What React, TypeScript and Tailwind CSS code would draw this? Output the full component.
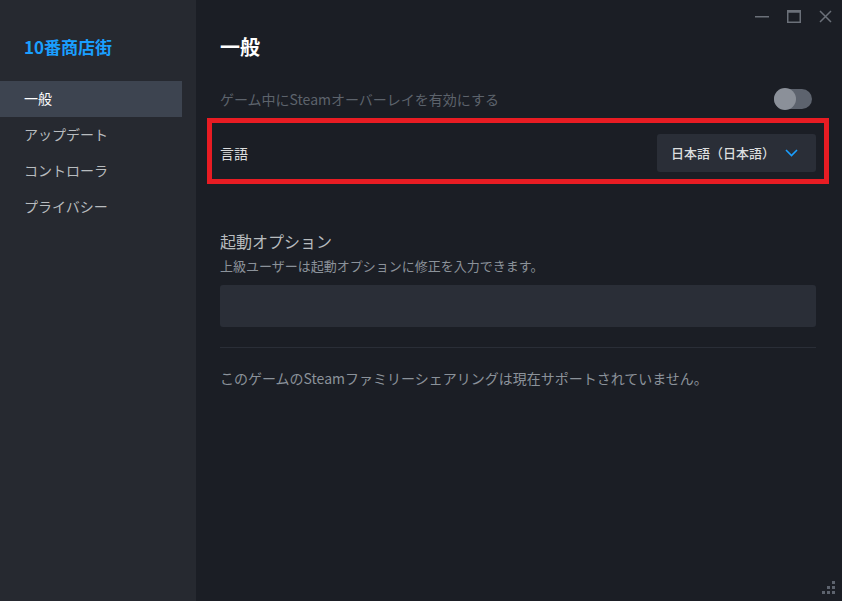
import React from "react";

const font = { fontFamily: '"Noto Sans CJK JP", "Noto Sans", sans-serif' };

export default function App() {
  const items = ["一般", "アップデート", "コントローラ", "プライバシー"];
  return (
    <div
      className="w-[842px] h-[601px] flex overflow-hidden font-['Noto_Sans_CJK_JP',sans-serif]"
      style={font}
    >
      <aside className="w-[196px] shrink-0 bg-[#262930] flex flex-col">
        <div className="pt-[36px] pl-[24px] h-[81px] text-[17px] leading-[22px] font-bold text-[#1a9fff]">
          10番商店街
        </div>
        <ul className="pr-[14px]">
          {items.map((t, i) => (
            <li
              key={t}
              className={
                i === 0
                  ? "h-[36px] flex items-center pl-[24px] pb-[2px] text-[14px] bg-[#3d4450] text-white"
                  : "h-[36px] flex items-center pl-[24px] pb-[2px] text-[14px] text-[#b8bcbf]"
              }
            >
              {t}
            </li>
          ))}
        </ul>
      </aside>
      <main className="flex-1 bg-[#1b1e25] relative flex flex-col">
        <div className="h-[32px] flex justify-end items-start">
          <div className="flex items-center pt-[9px] pr-[10px] gap-[18px]">
            <svg width="14" height="14" viewBox="0 0 14 14">
              <rect x="0" y="7" width="14" height="1.5" fill="#6b7079" />
            </svg>
            <svg width="14" height="13" viewBox="0 0 14 13">
              <rect x="0.75" y="0.75" width="12.5" height="11.5" fill="none" stroke="#6b7079" strokeWidth="1.5" />
              <rect x="0.75" y="0.75" width="12.5" height="2" fill="#6b7079" />
            </svg>
            <svg width="13" height="13" viewBox="0 0 13 13">
              <path d="M1 1 L12 12 M12 1 L1 12" stroke="#6b7079" strokeWidth="1.5" />
            </svg>
          </div>
        </div>
        <div className="pl-[24px] pr-[26px] flex flex-col">
          <h1 className="text-[20px] leading-[30px] font-bold text-white">一般</h1>
          <div className="mt-[18px] h-[38px] flex items-center justify-between">
            <span className="text-[14px] text-[#5d636c]">ゲーム中にSteamオーバーレイを有効にする</span>
            <div className="w-[38px] h-[20px] rounded-full bg-[#5d636e] relative mr-[4px]">
              <div className="absolute left-0 top-[-1px] w-[22px] h-[22px] rounded-full bg-[#8b9099]" />
            </div>
          </div>
          <div className="-mx-[13px] border-[5px] border-[#e81c23] px-[8px] pt-[11px] pb-[7px] flex items-center justify-between">
            <span className="text-[14px] text-[#dcdedf]">言語</span>
            <div className="w-[159px] h-[38px] rounded-[3px] bg-[#2a2e37] flex items-center pl-[14px] pr-[18px] justify-between">
              <span className="text-[13px] text-[#dcdedf] font-medium">日本語（日本語）</span>
              <svg width="13" height="8" viewBox="0 0 13 8">
                <path d="M1 1 L6.5 6.5 L12 1" fill="none" stroke="#1a9fff" strokeWidth="1.6" />
              </svg>
            </div>
          </div>
          <div className="mt-[46px] text-[16px] leading-[22px] text-[#b8bcbf]">起動オプション</div>
          <div className="mt-[5px] text-[13px] leading-[18px] text-[#8b929a]">
            上級ユーザーは起動オプションに修正を入力できます。
          </div>
          <div className="mt-[10px] h-[42px] rounded-[3px] bg-[#2a2e37]" />
          <div className="mt-[20px] h-px bg-[#2a2e37]" />
          <div className="mt-[20px] text-[14px] leading-[20px] text-[#8b929a]">
            このゲームのSteamファミリーシェアリングは現在サポートされていません。
          </div>
        </div>
        <svg className="absolute right-[6px] bottom-[6px]" width="14" height="14" viewBox="0 0 14 14">
          <rect x="10" y="0" width="3" height="3" fill="#5d636e" />
          <rect x="5" y="5" width="3" height="3" fill="#5d636e" />
          <rect x="10" y="5" width="3" height="3" fill="#5d636e" />
          <rect x="0" y="10" width="3" height="3" fill="#5d636e" />
          <rect x="5" y="10" width="3" height="3" fill="#5d636e" />
          <rect x="10" y="10" width="3" height="3" fill="#5d636e" />
        </svg>
      </main>
    </div>
  );
}
